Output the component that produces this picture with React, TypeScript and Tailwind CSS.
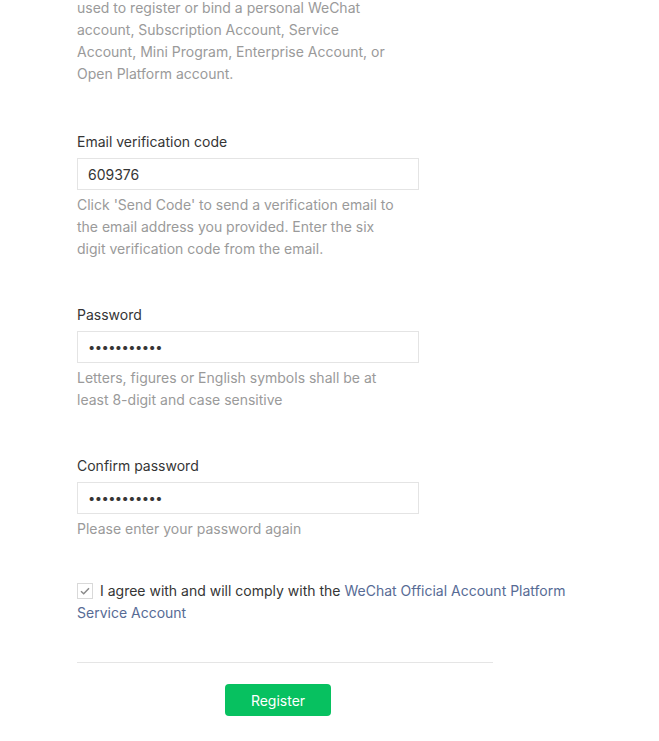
import React from 'react';

const font = { fontFamily: 'Inter, "Noto Sans", "Liberation Sans", sans-serif' };

type FieldProps = {
  label: string;
  type?: string;
  value: string;
  help: React.ReactNode;
  className?: string;
};

const Field: React.FC<FieldProps> = ({ label, type = 'text', value, help, className = 'mt-[44px]' }) => (
  <div className={className}>
    <label className="block text-[14px] leading-[22px] text-[#353535]">{label}</label>
    <input
      type={type}
      value={value}
      readOnly
      className={
        type === 'password'
          ? 'mt-[5px] block h-[32px] w-[342px] border border-[#e4e4e4] bg-white px-[10px] text-[13px] tracking-[-0.6px] text-[#353535] outline-none'
          : 'mt-[5px] block h-[32px] w-[342px] border border-[#e4e4e4] bg-white px-[10px] text-[14px] text-[#353535] outline-none'
      }
    />
    <p className="mt-[4px] text-[14px] leading-[22px] text-[#9a9a9a]">{help}</p>
  </div>
);

export default function App() {
  return (
    <div className="flex min-h-[741px] flex-col items-start bg-white pl-[77px]" style={font}>
      <p className="-mt-[3px] text-[14px] leading-[22px] text-[#9a9a9a]">
        used to register or bind a personal WeChat
        <br />
        account, Subscription Account, Service
        <br />
        Account, Mini Program, Enterprise Account, or
        <br />
        Open Platform account.
      </p>

      <Field
        className="mt-[46px]"
        label="Email verification code"
        value="609376"
        help={
          <>
            Click 'Send Code' to send a verification email to
            <br />
            the email address you provided. Enter the six
            <br />
            digit verification code from the email.
          </>
        }
      />

      <Field
        label="Password"
        type="password"
        value="abcdefgh123"
        help={
          <>
            Letters, figures or English symbols shall be at
            <br />
            least 8-digit and case sensitive
          </>
        }
      />

      <Field
        label="Confirm password"
        type="password"
        value="abcdefgh123"
        help="Please enter your password again"
      />

      {/* agreement */}
      <p className="mt-[40px] w-[500px] text-[14px] leading-[22px] text-[#353535]">
        <span className="relative -top-[1px] mr-[7px] inline-flex h-[16px] w-[16px] items-center justify-center border border-[#d9d9d9] bg-white align-middle">
          <svg width="10" height="8" viewBox="0 0 10 8" fill="none">
            <path d="M1 4.2 3.7 6.7 9 1.2" stroke="#8a8a8a" strokeWidth="1.5" />
          </svg>
        </span>
        I agree with and will comply with the{' '}
        <a href="#" className="text-[#576b95]">
          WeChat Official Account Platform Service Account
        </a>
      </p>

      <div className="mt-[38px] h-px w-[416px] bg-[#e5e5e5]" />

      <button className="ml-[148px] mt-[21px] h-[32px] w-[106px] rounded-[4px] bg-[#07c160] text-[14px] text-white">
        Register
      </button>
    </div>
  );
}
